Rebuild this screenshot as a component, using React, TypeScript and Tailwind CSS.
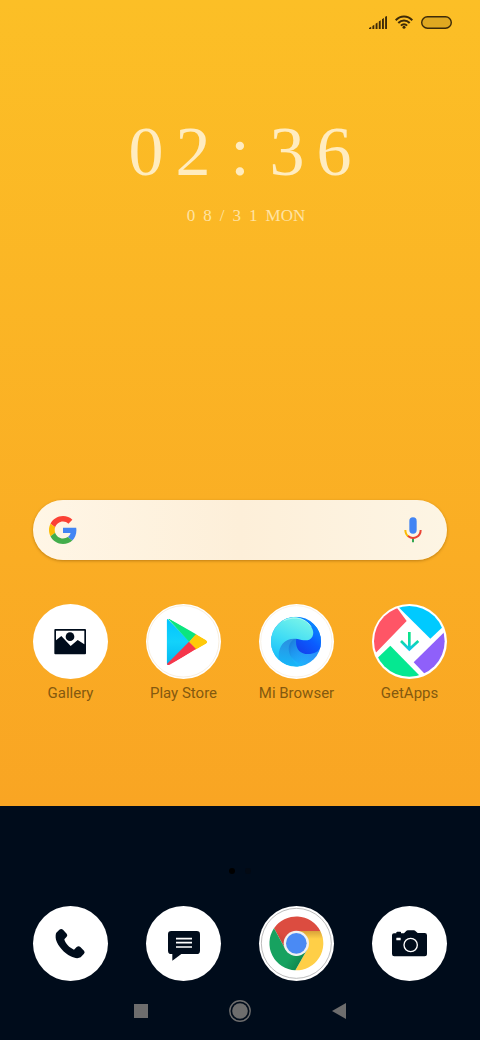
import type { ReactNode } from 'react';

type AppItem = {
  name: string;
  icon: ReactNode;
};

const INK = '#000c1b';

function Glyph({ children }: { children: ReactNode }) {
  return (
    <svg viewBox="0 0 225 225" className="size-full" aria-hidden="true">
      {children}
    </svg>
  );
}

function GalleryIcon() {
  return (
    <Glyph>
      <rect x="64" y="75" width="95" height="76" rx="3" fill={INK} />
      <path d="M69 80H154V121L134 108L113 126L85 96L69 109Z" fill="#fff" />
      <circle cx="111" cy="98" r="13" fill={INK} />
    </Glyph>
  );
}

function PlayStoreIcon() {
  return (
    <Glyph>
      <defs>
        <linearGradient id="play-blue" x1="0" y1="0" x2="0" y2="1">
          <stop offset="0" stopColor="#00c3ff" />
          <stop offset="0.5" stopColor="#12d2fb" />
          <stop offset="1" stopColor="#00b4f0" />
        </linearGradient>
        <clipPath id="play-shape">
          <path d="M62 50Q62 42 71 45L179 107Q188 114 179 120L71 182Q62 185 62 177Z" />
        </clipPath>
      </defs>
      <circle cx="112" cy="112" r="107" fill="none" stroke="#f3e6cf" strokeWidth="2" />
      <g clipPath="url(#play-shape)">
        <path d="M60 40L132 113L60 188Z" fill="url(#play-blue)" />
        <path d="M62 40L153 89L130 114Z" fill="#0be57f" />
        <path d="M150 90L190 114L149 137L129 114Z" fill="#ffc909" />
        <path d="M129 113L150 135L62 190V181Z" fill="#f5364b" />
      </g>
    </Glyph>
  );
}

function MiBrowserIcon() {
  return (
    <Glyph>
      <defs>
        <linearGradient id="mi-base" gradientUnits="userSpaceOnUse" x1="180" y1="90" x2="100" y2="190">
          <stop offset="0" stopColor="#0c80ff" />
          <stop offset="0.5" stopColor="#2b98fb" />
          <stop offset="1" stopColor="#16c0fb" />
        </linearGradient>
        <linearGradient id="mi-wave" x1="0.6" y1="0" x2="0.2" y2="1">
          <stop offset="0" stopColor="#74f2ea" />
          <stop offset="0.5" stopColor="#3fdcf5" />
          <stop offset="1" stopColor="#12b9fb" />
        </linearGradient>
        <linearGradient id="mi-deep" gradientUnits="userSpaceOnUse" x1="185" y1="70" x2="120" y2="145">
          <stop offset="0" stopColor="#0b8cff" />
          <stop offset="0.5" stopColor="#0a5cff" />
          <stop offset="1" stopColor="#1340ec" />
        </linearGradient>
        <linearGradient id="mi-fold" gradientUnits="userSpaceOnUse" x1="88" y1="120" x2="140" y2="170">
          <stop offset="0" stopColor="#1b7fdd" />
          <stop offset="1" stopColor="#1f9cf6" stopOpacity="0" />
        </linearGradient>
        <linearGradient id="mi-tail" gradientUnits="userSpaceOnUse" x1="100" y1="105" x2="90" y2="190">
          <stop offset="0" stopColor="#2b8fe0" />
          <stop offset="1" stopColor="#16b8fa" />
        </linearGradient>
        <clipPath id="mi-ball">
          <circle cx="111" cy="113" r="75" />
        </clipPath>
      </defs>
      <circle cx="112" cy="112" r="107" fill="none" stroke="#f5ecdc" strokeWidth="2" />
      <g clipPath="url(#mi-ball)">
        <rect x="36" y="38" width="150" height="150" fill="url(#mi-base)" />
        <path d="M60 178C52 130 72 100 114 102C92 118 82 160 122 190Z" fill="url(#mi-tail)" />
        <path d="M114 102C78 112 82 164 122 178C150 176 172 160 178 146L130 146Z" fill="url(#mi-fold)" />
        <path d="M112 103C107 132 122 150 147 150C172 150 190 136 190 108C190 84 172 62 150 52L140 95Z" fill="url(#mi-deep)" />
        <path d="M60 176C24 156 20 86 58 56C82 34 120 34 140 52C158 66 168 82 160 98C150 114 133 109 116 105C78 98 52 126 60 176Z" fill="url(#mi-wave)" />
        <path d="M74 50C108 34 142 44 156 68" fill="none" stroke="#a8f8f2" strokeWidth="3" />
      </g>
    </Glyph>
  );
}

function GetAppsIcon() {
  return (
    <Glyph>
      <defs>
        <linearGradient id="get-arrow" gradientUnits="userSpaceOnUse" x1="0" y1="85" x2="0" y2="140">
          <stop offset="0.3" stopColor="#0be28c" />
          <stop offset="1" stopColor="#0fc4f4" />
        </linearGradient>
        <clipPath id="get-disc">
          <circle cx="112" cy="112" r="106" />
        </clipPath>
      </defs>
      <g clipPath="url(#get-disc)">
        <path d="M71 0L73 9L104 51L13 145L-10 140V0Z" fill="#ff5566" />
        <path d="M76 6L175 104L213 68L225 0H80Z" fill="#00caff" />
        <path d="M218 83L125 175L162 214L225 225V83Z" fill="#8f60fa" />
        <path d="M55 125L14 164L0 225H150L146 218Z" fill="#05e891" />
      </g>
      <path d="M112 84V136M87 111L112 136L139 111" fill="none" stroke="url(#get-arrow)" strokeWidth="8" />
    </Glyph>
  );
}

function PhoneIcon() {
  return (
    <Glyph>
      <path
        d="M79 71Q85 67 90 71L101 83Q105 87 101 92L94 100C96 112 110 126 123 131L131 123Q137 119 142 123L153 134Q157 139 153 143L143 154C136 158 124 157 113 151C94 141 75 121 69 101C67 92 68 83 70 80Z"
        fill={INK}
      />
    </Glyph>
  );
}

function MessagesIcon() {
  return (
    <Glyph>
      <rect x="66" y="75" width="96" height="69" rx="10" fill={INK} />
      <path d="M79 142V164L109 142Z" fill={INK} />
      <path d="M90 98H138M90 110H138M90 123H138" stroke="#fff" strokeWidth="5" />
    </Glyph>
  );
}

function ChromeIcon() {
  return (
    <Glyph>
      <defs>
        <linearGradient id="chrome-red" x1="0" y1="1" x2="0.6" y2="0.2">
          <stop offset="0" stopColor="#b83a30" />
          <stop offset="0.5" stopColor="#dc4c40" />
        </linearGradient>
        <linearGradient id="chrome-green" x1="1" y1="0.9" x2="0.6" y2="0.6">
          <stop offset="0" stopColor="#0c7a45" />
          <stop offset="1" stopColor="#17a260" />
        </linearGradient>
        <linearGradient id="chrome-yellow" x1="0" y1="0" x2="0" y2="1">
          <stop offset="0" stopColor="#d9a23a" />
          <stop offset="0.2" stopColor="#ffcf47" />
        </linearGradient>
      </defs>
      <circle cx="112" cy="112" r="105" fill="none" stroke="#9a9a9a" strokeWidth="2" />
      <path d="M45 67A81 81 0 0 1 184 75H112L80 131Z" fill="url(#chrome-red)" />
      <path d="M184 75A81 81 0 0 1 109 193L144 131L112 75Z" fill="url(#chrome-yellow)" />
      <path d="M109 193A81 81 0 0 1 45 67L80 131L112 150L144 131Z" fill="url(#chrome-green)" />
      <circle cx="112" cy="112" r="38" fill="#f1f1f1" />
      <circle cx="112" cy="112" r="31" fill="#4a8af4" />
    </Glyph>
  );
}

function CameraIcon() {
  return (
    <Glyph>
      <path
        d="M66 82H73V79Q73 77 76 77H85Q87 77 87 79V82H96L102 76Q104 73 108 73H125Q129 73 131 76L137 81H158Q165 81 165 88V145Q165 151 158 151H67Q60 151 60 144V88Q60 82 66 82Z"
        fill={INK}
      />
      <rect x="73" y="95" width="13" height="8" rx="1" fill="#fff" />
      <circle cx="116" cy="117" r="20" fill="none" stroke="#fff" strokeWidth="4" />
    </Glyph>
  );
}

const apps: AppItem[] = [
  { name: 'Gallery', icon: <GalleryIcon /> },
  { name: 'Play Store', icon: <PlayStoreIcon /> },
  { name: 'Mi Browser', icon: <MiBrowserIcon /> },
  { name: 'GetApps', icon: <GetAppsIcon /> },
];

const dock: AppItem[] = [
  { name: 'Phone', icon: <PhoneIcon /> },
  { name: 'Messages', icon: <MessagesIcon /> },
  { name: 'Chrome', icon: <ChromeIcon /> },
  { name: 'Camera', icon: <CameraIcon /> },
];

function StatusBar() {
  return (
    <header className="flex h-11 items-center justify-end gap-2 pr-7 text-[#3d2a08]">
      <svg viewBox="0 0 18 13" className="h-[13px] w-[18px]" fill="currentColor" aria-hidden="true">
        <path d="M0 13V12L2.2 10.8V13ZM3.4 13V9.9L5.3 8.7V13ZM6.6 13V7.8L8.5 6.5V13ZM9.8 13V5.5L11.7 4.2V13ZM13 13V3.2L14.9 2V13ZM16.1 13V0.8L18 0V13Z" />
      </svg>
      <svg viewBox="0 0 18 14" className="h-[14px] w-[18px]" fill="none" stroke="currentColor" strokeWidth="2" aria-hidden="true">
        <path d="M0.7 5.2C5.5 0.3 12.5 0.3 17.3 5.2M3.3 8C6.5 4.7 11.5 4.7 14.7 8M5.9 10.6C7.7 8.8 10.3 8.8 12.1 10.6" />
        <circle cx="9" cy="12.3" r="1.5" fill="currentColor" stroke="none" />
      </svg>
      <svg viewBox="0 0 31 13" className="h-[13px] w-[31px]" aria-hidden="true">
        <rect x="0.7" y="0.7" width="29.6" height="11.6" rx="5.8" fill="#dfa821" stroke="currentColor" strokeWidth="1.4" />
      </svg>
    </header>
  );
}

function ClockWidget() {
  return (
    <section className="mt-[74px] text-center font-['Liberation_Serif',serif] text-[#ffecc0]">
      <p className="mx-auto grid w-[235px] grid-cols-5 text-[70px] leading-[68px]">
        <span>0</span>
        <span>2</span>
        <span>:</span>
        <span>3</span>
        <span>6</span>
      </p>
      <p className="mt-5 flex justify-center gap-2 pl-3 text-[17px] leading-5 text-[#ffe3a3]">
        <span>0</span>
        <span>8</span>
        <span>/</span>
        <span>3</span>
        <span>1</span>
        <span>MON</span>
      </p>
    </section>
  );
}

function SearchBar() {
  return (
    <form
      role="search"
      className="mx-[33px] mt-auto flex h-[60px] items-center rounded-full bg-linear-to-r from-[#fff6e6] via-[#fdefd9] to-[#fdf5e4] px-4 shadow-[0_1px_3px_rgba(120,70,0,0.45)]"
    >
      <svg viewBox="0 0 48 48" className="size-7 shrink-0" aria-hidden="true">
        <path fill="#fb4134" d="M24 9.5c3.54 0 6.71 1.22 9.21 3.6l6.85-6.85C35.9 2.38 30.47 0 24 0 14.62 0 6.51 5.38 2.56 13.22l7.98 6.19C12.43 13.72 17.74 9.5 24 9.5z" />
        <path fill="#4285f4" d="M46.98 24.55c0-1.57-.15-3.09-.38-4.55H24v9.02h12.94c-.58 2.96-2.26 5.48-4.78 7.18l7.73 6c4.51-4.18 7.09-10.36 7.09-17.65z" />
        <path fill="#fbbc05" d="M10.53 28.59c-.48-1.45-.76-2.99-.76-4.59s.27-3.14.76-4.59l-7.98-6.19C.92 16.46 0 20.12 0 24c0 3.88.92 7.54 2.56 10.78l7.97-6.19z" />
        <path fill="#43ad4b" d="M24 48c6.48 0 11.93-2.13 15.89-5.81l-7.73-6c-2.15 1.45-4.92 2.3-8.16 2.3-6.26 0-11.57-4.22-13.47-9.91l-7.98 6.19C6.51 42.62 14.62 48 24 48z" />
      </svg>
      <input type="search" aria-label="Search" className="h-full min-w-0 flex-1 bg-transparent px-3 text-base outline-none" />
      <button type="button" aria-label="Voice search" className="flex size-9 shrink-0 items-center justify-center">
        <svg viewBox="0 0 54 78" className="h-[26px] w-[18px]" fill="none" strokeWidth="6" aria-hidden="true">
          <path d="M27 64V76" stroke="#34a853" />
          <path d="M4 39C4 48 8 55 14 59" stroke="#fbbc05" />
          <path d="M12 57C28 70 50 59 50 39" stroke="#ea4335" />
          <rect x="16" y="1" width="22" height="49" rx="11" fill="#4285f4" />
        </svg>
      </button>
    </form>
  );
}

function AppGrid({ items, showLabels = false }: { items: AppItem[]; showLabels?: boolean }) {
  return (
    <div className="grid grid-cols-4 px-3.5">
      {items.map((item) => (
        <button key={item.name} type="button" aria-label={item.name} className="flex flex-col items-center gap-1">
          <span className="block size-[75px] rounded-full bg-white">{item.icon}</span>
          {showLabels && (
            <span className="text-[15px] leading-5 whitespace-nowrap text-[#84590f]">{item.name}</span>
          )}
        </button>
      ))}
    </div>
  );
}

function NavBar() {
  return (
    <nav className="mt-3 flex justify-center gap-[55px] text-[#6d6d6d]">
      <button type="button" aria-label="Recent apps" className="flex h-9 w-11 items-center justify-center">
        <span className="size-[14px] bg-current" />
      </button>
      <button type="button" aria-label="Home" className="flex h-9 w-11 items-center justify-center">
        <svg viewBox="0 0 22 22" className="size-[22px]" aria-hidden="true">
          <circle cx="11" cy="11" r="10.2" fill="none" stroke="currentColor" strokeWidth="1.4" />
          <circle cx="11" cy="11" r="7.8" fill="currentColor" />
        </svg>
      </button>
      <button type="button" aria-label="Back" className="flex h-9 w-11 items-center justify-center">
        <svg viewBox="0 0 14 16" className="h-4 w-[14px]" fill="currentColor" aria-hidden="true">
          <path d="M14 0V16L0 8Z" />
        </svg>
      </button>
    </nav>
  );
}

export default function App() {
  return (
    <div className="flex min-h-screen flex-col bg-[#000c1b] font-[Roboto,sans-serif]">
      <main className="flex flex-1 flex-col bg-linear-to-b from-[#fcbf26] to-[#f9a523] pb-[103px]">
        <StatusBar />
        <ClockWidget />
        <SearchBar />
        <div className="mt-11">
          <AppGrid items={apps} showLabels />
        </div>
      </main>

      <footer className="pt-[62px] pb-[11px]">
        {/* Page indicator */}
        <div className="mb-8 flex justify-center gap-2.5">
          <span className="size-1.5 rounded-full bg-black" />
          <span className="size-1.5 rounded-full bg-[#030a14]" />
        </div>
        <AppGrid items={dock} />
        <NavBar />
      </footer>
    </div>
  );
}
